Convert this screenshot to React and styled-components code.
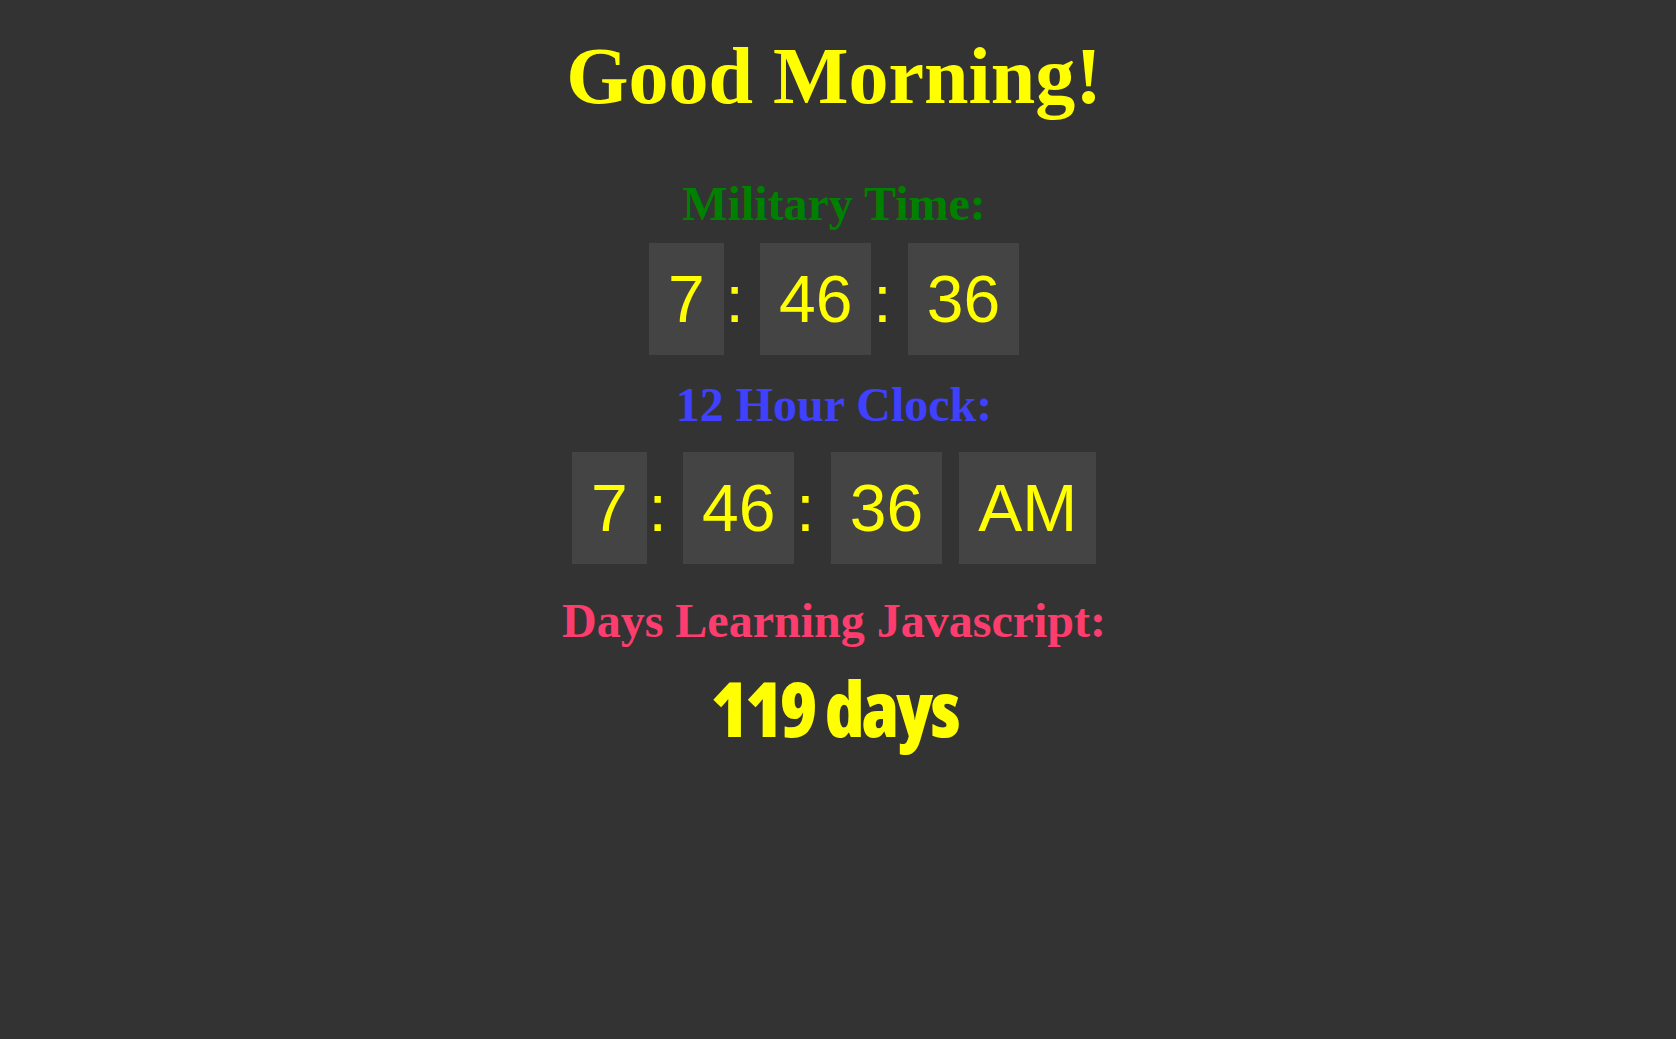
import React from 'react';
import styled, { createGlobalStyle } from 'styled-components';

const GlobalStyle = createGlobalStyle`
  html, body {
    margin: 0;
    padding: 0;
    background: #333333;
  }
  body {
    min-height: 1039px;
    font-family: "Liberation Serif", "Times New Roman", serif;
  }
`;

const Page = styled.div`
  width: 1668px;
  padding-top: 36px;
  display: flex;
  flex-direction: column;
  align-items: center;
`;

const Section = styled.section`
  display: flex;
  flex-direction: column;
  align-items: center;
  margin-top: ${(p) => p.$top || 0}px;
`;

const Title = styled.h1`
  margin: 0;
  font-size: 80px;
  line-height: 80px;
  font-weight: bold;
  color: #ffff00;
`;

const Heading = styled.h2`
  margin: 0;
  font-size: 48px;
  line-height: 48px;
  font-weight: bold;
  color: ${(p) => p.$color};
`;

const Clock = styled.div`
  display: flex;
  align-items: center;
  margin-top: ${(p) => p.$top}px;
  font-family: "Liberation Sans", Arial, sans-serif;
  font-size: 66px;
  line-height: 76px;
  color: #ffff00;
`;

const Cell = styled.span`
  background: #444444;
  padding: 18px 19px;
  margin-left: ${(p) => p.$gap || 0}px;
`;

const Colon = styled.span`
  margin: 0 16px 0 2px;
`;

const DayCount = styled.div`
  margin-top: 25px;
  font-family: "Open Sans", "DejaVu Sans Condensed", sans-serif;
  font-stretch: 75%;
  font-weight: 800;
  font-size: 76px;
  line-height: 76px;
  letter-spacing: -3px;
  color: #ffff00;
`;

function TimeRow({ parts, suffix, top }) {
  return (
    <Clock $top={top}>
      {parts.map((p, i) => (
        <React.Fragment key={i}>
          {i > 0 && <Colon>:</Colon>}
          <Cell>{p}</Cell>
        </React.Fragment>
      ))}
      {suffix && <Cell $gap={17}>{suffix}</Cell>}
    </Clock>
  );
}

export default function App() {
  return (
    <>
      <GlobalStyle />
      <Page>
        <Title>Good Morning!</Title>

        <Section $top={64}>
          <Heading $color="#008000">Military Time:</Heading>
          <TimeRow parts={['7', '46', '36']} top={15} />
        </Section>

        <Section $top={26}>
          <Heading $color="#4040ff">12 Hour Clock:</Heading>
          <TimeRow parts={['7', '46', '36']} suffix="AM" top={23} />
        </Section>

        <Section $top={33}>
          <Heading $color="#fd3d6e">Days Learning Javascript:</Heading>
          <DayCount>119 days</DayCount>
        </Section>
      </Page>
    </>
  );
}
